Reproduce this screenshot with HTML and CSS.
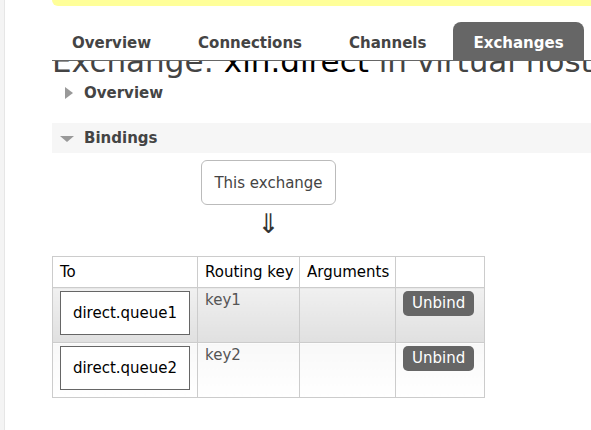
FILE: index.html
```html
<!DOCTYPE html>
<html lang="en">
  <head>
    <meta charset="UTF-8" />
    <meta name="viewport" content="width=device-width, initial-scale=1.0" />
    <title>Exchange: xin.direct</title>
    <link rel="stylesheet" href="styles.css">
  </head>
  <body>
    <div class="rail"></div>
    <div class="main">
      <div class="flash"></div>

      <ul class="tabs">
        <li>Overview</li>
        <li>Connections</li>
        <li>Channels</li>
        <li class="active">Exchanges</li>
      </ul>

      <h1>Exchange: <b>xin.direct</b> in virtual host <b>/</b></h1>

      <div class="section-head">
        <span class="arrow-right"></span>
        <span>Overview</span>
      </div>

      <div class="section-head open">
        <span class="arrow-down"></span>
        <span>Bindings</span>
      </div>

      <div class="bindings">
        <div class="this-exchange">This exchange</div>
        <div class="down">&#8659;</div>
        <table class="list">
          <thead>
            <tr>
              <th class="col-to">To</th>
              <th class="col-key">Routing key</th>
              <th class="col-args">Arguments</th>
              <th class="col-action"></th>
            </tr>
          </thead>
          <tbody>
            <tr class="alt1">
              <td><div class="queue">direct.queue1</div></td>
              <td class="key">key1</td>
              <td></td>
              <td><button type="button">Unbind</button></td>
            </tr>
            <tr class="alt2">
              <td><div class="queue">direct.queue2</div></td>
              <td class="key">key2</td>
              <td></td>
              <td><button type="button">Unbind</button></td>
            </tr>
          </tbody>
        </table>
      </div>
    </div>
  </body>
</html>
```

FILE: styles.css
```css
body {
  font-family: "DejaVu Sans", Verdana, sans-serif;
  font-size: 15px;
  margin: 0;
  padding: 0;
  color: #444;
  background: #fff;
  display: flex;
  height: 100vh;
  overflow: hidden;
}
.rail {
  width: 4px;
  flex: none;
  background: #f4f4f4;
  border-right: 1px solid #e6e6e6;
}
.main {
  flex: 1;
  min-width: 0;
  padding-left: 47px;
}
.flash {
  height: 6px;
  background: #ffff99;
  border-bottom-left-radius: 8px;
}
.tabs {
  list-style: none;
  margin: 16px 0 0;
  padding: 0;
  display: flex;
  gap: 7px;
  border-bottom: 1px solid #666;
  background: #fff;
  position: relative;
  z-index: 1;
}
.tabs li {
  padding: 0 20px;
  height: 38px;
  line-height: 42px;
  font-weight: bold;
  color: #444;
  white-space: nowrap;
  border-radius: 8px 8px 0 0;
}
.tabs li.active {
  background: #666;
  color: #fff;
}
h1 {
  font-size: 31px;
  font-weight: normal;
  line-height: 33px;
  margin: -16px 0 0;
  white-space: nowrap;
  color: #444;
}
h1 b {
  font-weight: normal;
  color: #000;
}
.section-head {
  display: flex;
  align-items: center;
  height: 30px;
  font-weight: bold;
  color: #444;
}
.section-head.open {
  margin-top: 15px;
  background: #f6f6f6;
}
.arrow-right {
  width: 0;
  height: 0;
  border-left: 8px solid #999;
  border-top: 6px solid transparent;
  border-bottom: 6px solid transparent;
  margin: 0 11px 0 13px;
}
.arrow-down {
  width: 0;
  height: 0;
  border-top: 6px solid #999;
  border-left: 7px solid transparent;
  border-right: 7px solid transparent;
  margin: 2px 10px 0 8px;
}
.bindings {
  width: fit-content;
  display: flex;
  flex-direction: column;
  align-items: center;
  margin-top: 7px;
}
.this-exchange {
  padding: 14px 12px 12px;
  border: 1px solid #bbb;
  border-radius: 6px;
  line-height: 17px;
}
.down {
  font-size: 27px;
  line-height: 32px;
  color: #333;
  margin: 3px 0 16px;
}
table.list {
  border-collapse: collapse;
  border: 1px solid #ccc;
  table-layout: fixed;
  width: 433px;
}
table.list th,
table.list td {
  border: 1px solid #ccc;
  text-align: left;
  vertical-align: top;
  white-space: nowrap;
}
table.list th {
  font-weight: normal;
  color: #000;
  height: 28px;
  padding: 1px 7px 0;
  line-height: 29px;
}
.col-to { width: 130px; }
.col-key { width: 87px; }
.col-args { width: 81px; }
.col-action { width: 74px; }
table.list td {
  padding: 3px 7px 0;
  height: 51px;
}
tr.alt1 td {
  background: linear-gradient(to bottom, #f0f0f0 0%, #e0e0e0 100%);
}
tr.alt2 td {
  background: linear-gradient(to bottom, #f8f8f8 0%, #ffffff 100%);
}
.queue {
  width: 130px;
  box-sizing: border-box;
  border: 1px solid #666;
  background: #fff;
  color: #000;
  text-align: center;
  padding: 12px 0;
  line-height: 18px;
}
td.key {
  color: #555;
  padding-top: 4px;
}
button {
  font-family: inherit;
  font-size: 15px;
  color: #fff;
  background: #666;
  border: none;
  border-radius: 5px;
  padding: 4px 9px;
  line-height: 17px;
  cursor: pointer;
}
```
